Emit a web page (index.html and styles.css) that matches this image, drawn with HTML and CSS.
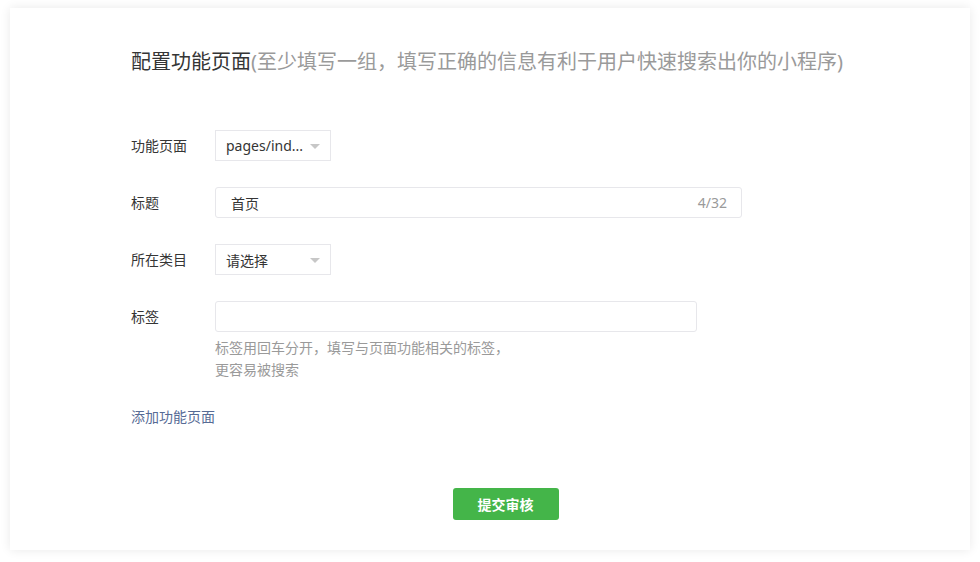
FILE: index.html
```html
<!DOCTYPE html>
<html lang="zh-CN">
<head>
  <meta charset="UTF-8">
  <meta name="viewport" content="width=device-width, initial-scale=1.0">
  <title>配置功能页面</title>
  <link rel="stylesheet" href="styles.css">
</head>
<body>
  <div class="card">
    <h2 class="page-title">配置功能页面<span class="title-tips">(至少填写一组，填写正确的信息有利于用户快速搜索出你的小程序)</span></h2>

    <div class="form">
      <div class="form-item">
        <label class="form-label">功能页面</label>
        <div class="select">
          <span class="select-text">pages/ind...</span>
          <i class="caret"></i>
        </div>
      </div>

      <div class="form-item">
        <label class="form-label">标题</label>
        <div class="input input-title">
          <span class="input-value">首页</span>
          <span class="counter">4/32</span>
        </div>
      </div>

      <div class="form-item">
        <label class="form-label">所在类目</label>
        <div class="select">
          <span class="select-text">请选择</span>
          <i class="caret"></i>
        </div>
      </div>

      <div class="form-item form-item-top">
        <label class="form-label">标签</label>
        <div class="field">
          <div class="input input-tags"></div>
          <p class="hint">标签用回车分开，填写与页面功能相关的标签，<br>更容易被搜索</p>
        </div>
      </div>
    </div>

    <a href="#" class="add-link">添加功能页面</a>

    <div class="actions">
      <button class="btn-primary">提交审核</button>
    </div>
  </div>
</body>
</html>
```

FILE: styles.css
```css
body {
  margin: 0;
  padding: 8px 10px 12px;
  background: #fff;
  font-family: "Noto Sans", "Noto Sans CJK SC", sans-serif;
  font-size: 14px;
  color: #353535;
}

.card {
  height: 542px;
  box-sizing: border-box;
  padding: 41px 121px 0;
  background: #fff;
  box-shadow: 0 0 10px rgba(0, 0, 0, 0.09);
}

.page-title {
  margin: 0 0 55px;
  font-size: 20px;
  font-weight: normal;
  line-height: 26px;
  color: #353535;
}

.title-tips {
  color: #9a9a9a;
}

.form-item {
  display: flex;
  align-items: center;
  margin-bottom: 26px;
}

.form-item-top {
  align-items: flex-start;
  margin-bottom: 0;
}

.form-item-top .form-label {
  line-height: 31px;
}

.form-label {
  width: 84px;
  flex-shrink: 0;
  line-height: 20px;
  color: #353535;
}

.select {
  width: 116px;
  height: 31px;
  box-sizing: border-box;
  padding: 0 10px;
  border: 1px solid #e7e7eb;
  display: flex;
  align-items: center;
  justify-content: space-between;
}

.select-text {
  color: #353535;
}

.caret {
  width: 0;
  height: 0;
  border-left: 5px solid transparent;
  border-right: 5px solid transparent;
  border-top: 5px solid #c7c7c7;
  margin-top: 1px;
}

.input {
  height: 31px;
  box-sizing: border-box;
  border: 1px solid #e7e7eb;
  border-radius: 3px;
  display: flex;
  align-items: center;
  justify-content: space-between;
}

.input-title {
  width: 527px;
  padding: 0 14px 0 15px;
}

.input-tags {
  width: 482px;
}

.counter {
  color: #9a9a9a;
}

.hint {
  margin: 5px 0 0;
  font-size: 14px;
  line-height: 22px;
  color: #9a9a9a;
}

.add-link {
  display: inline-block;
  margin-top: 25px;
  line-height: 22px;
  color: #576b95;
  text-decoration: none;
}

.actions {
  display: flex;
  justify-content: center;
  margin-top: 60px;
  padding-left: 31px;
}

.btn-primary {
  width: 106px;
  height: 32px;
  border: none;
  border-radius: 3px;
  background: #44b549;
  color: #fff;
  font-family: inherit;
  font-size: 14px;
  font-weight: bold;
  cursor: pointer;
}
```
